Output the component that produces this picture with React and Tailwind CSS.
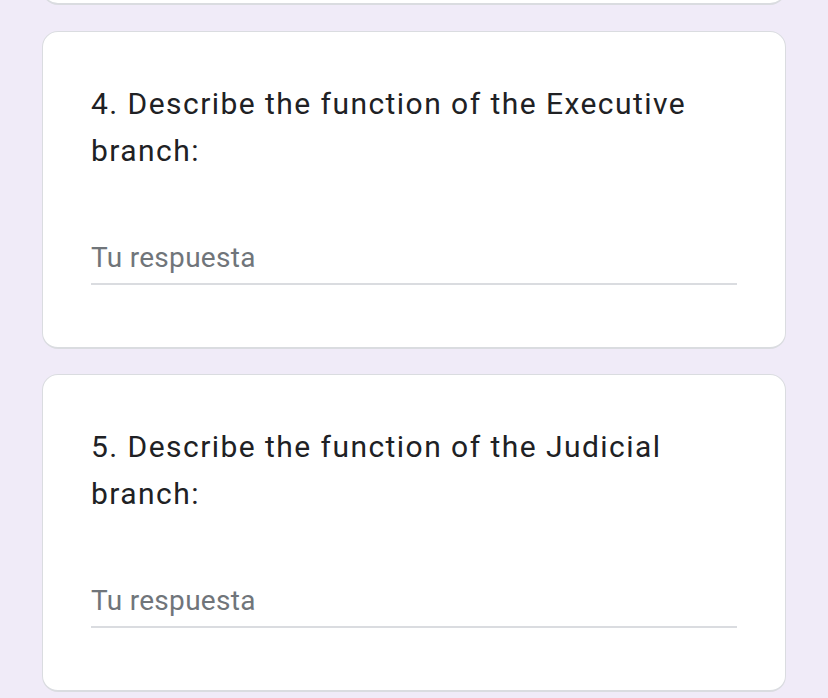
const QUESTIONS = [
  { n: 4, text: 'Describe the function of the Executive branch:' },
  { n: 5, text: 'Describe the function of the Judicial branch:' },
];

function Card({ children, className = '' }) {
  return (
    <div className={`bg-white border border-[#dadce0] border-b-2 rounded-[16px] ${className}`}>
      {children}
    </div>
  );
}

export default function App() {
  return (
    <div className="min-h-screen bg-[#f0ebf8] px-[42px] overflow-hidden" style={{ fontFamily: 'Roboto, "Liberation Sans", sans-serif' }}>
      {/* tail of the previous question */}
      <Card className="h-[100px] -mt-[95px]" />

      <div className="flex flex-col gap-[25px] mt-[26px]">
        {QUESTIONS.map(q => (
          <Card key={q.n} className="px-[48px] pt-[48px] pb-[62px]">
            <p className="text-[30px] leading-[47px] text-[#202124] tracking-[1.45px]">
              {q.n}. {q.text}
            </p>
            <div className="mt-[67px]">
              <p className="text-[28px] leading-[34px] text-[#70757a] tracking-[0.3px]">Tu respuesta</p>
              <div className="mt-[8px] h-[2px] bg-[#dadce0]" />
            </div>
          </Card>
        ))}
      </div>
    </div>
  );
}
